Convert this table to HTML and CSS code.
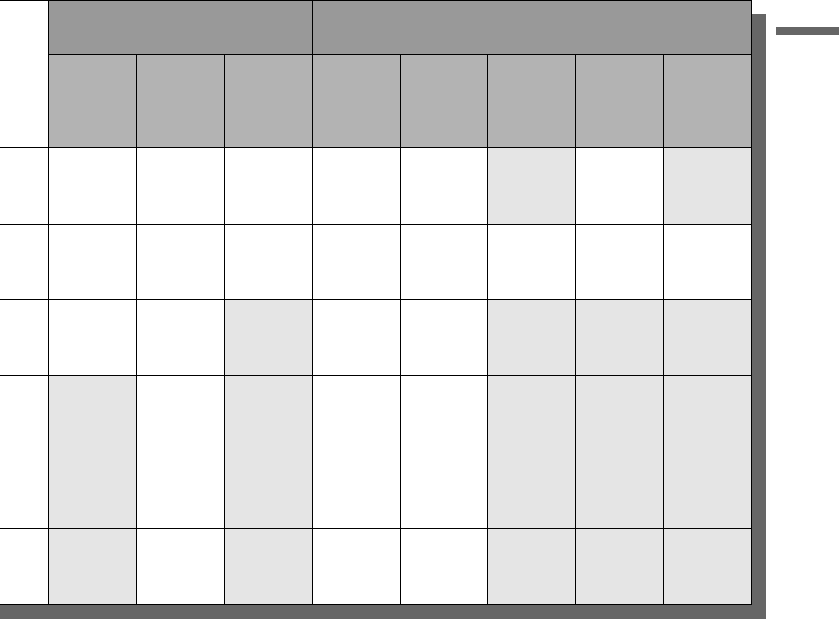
FILE: index.html
```html
<!DOCTYPE html>
<html lang="en">
<head>
    <meta charset="UTF-8">
    <title>Schedule</title>
    <link rel="stylesheet" href="styles.css">
</head>
<body>
    <div class="page">
        <div class="sheet">
            <table class="grid">
                <colgroup>
                    <col class="col-head">
                    <col span="8" class="col-day">
                </colgroup>
                <tr class="row-group">
                    <td rowspan="2" class="corner"></td>
                    <td colspan="3" class="group"></td>
                    <td colspan="5" class="group"></td>
                </tr>
                <tr class="row-sub">
                    <td class="sub"></td><td class="sub"></td><td class="sub"></td>
                    <td class="sub"></td><td class="sub"></td><td class="sub"></td>
                    <td class="sub"></td><td class="sub"></td>
                </tr>
                <tr class="row-a">
                    <td></td><td></td><td></td><td></td><td></td><td></td>
                    <td class="on"></td><td></td><td class="on"></td>
                </tr>
                <tr class="row-b">
                    <td></td><td></td><td></td><td></td><td></td><td></td>
                    <td></td><td></td><td></td>
                </tr>
                <tr class="row-c">
                    <td></td><td></td><td></td><td class="on"></td><td></td><td></td>
                    <td class="on"></td><td class="on"></td><td class="on"></td>
                </tr>
                <tr class="row-d">
                    <td></td><td class="on"></td><td></td><td class="on"></td><td></td><td></td>
                    <td class="on"></td><td class="on"></td><td class="on"></td>
                </tr>
                <tr class="row-e">
                    <td></td><td class="on"></td><td></td><td class="on"></td><td></td><td></td>
                    <td class="on"></td><td class="on"></td><td class="on"></td>
                </tr>
            </table>
        </div>
        <div class="legend"></div>
    </div>
</body>
</html>
```

FILE: styles.css
```css
html {
    overflow: hidden;
}

body {
    margin: 0;
    background: #fff;
    min-height: 619px;
}

.page {
    display: flex;
    align-items: flex-start;
    gap: 24px;
    margin-left: -20px;
    padding-bottom: 14px; /* room for the sheet shadow */
}

.sheet {
    flex-shrink: 0;
    background: #fff;
    box-shadow: 14px 14px 0 #666;
}

.grid {
    table-layout: fixed;
    border-collapse: collapse;
    width: 771px;
}

.col-head { width: 68px; }
.col-day { width: 87.875px; }

.grid td {
    border: 1px solid #000;
    padding: 0;
}

.row-group { height: 54px; }
.row-sub { height: 93px; }
.row-a { height: 77px; }
.row-b { height: 75px; }
.row-c { height: 76px; }
.row-d { height: 153px; }
.row-e { height: 76px; }

.grid .corner { background: #fff; }
.grid .group { background: #999; }
.grid .sub { background: #b3b3b3; }
.grid .on { background: #e5e5e5; }

.legend {
    flex-shrink: 0;
    width: 80px;
    height: 8px;
    margin-top: 27px;
    background: #666;
}
```
